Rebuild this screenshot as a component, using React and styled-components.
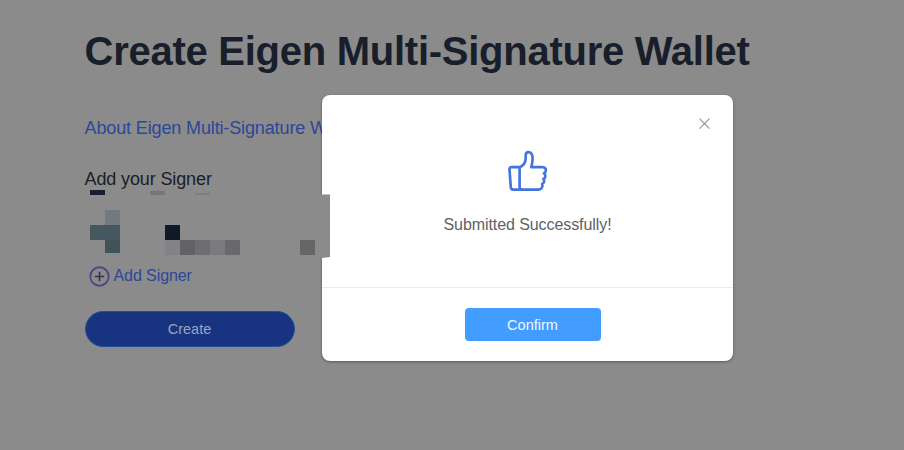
import React from "react";
import styled, { createGlobalStyle } from "styled-components";

const GlobalStyle = createGlobalStyle`
  * { box-sizing: border-box; }
  body {
    margin: 0;
    overflow: hidden;
    background: #8b8b8b;
    font-family: "Liberation Sans", Arial, sans-serif;
  }
  button { font-family: inherit; }
`;

const Page = styled.main`
  position: relative;
  height: 450px;
  padding: 28px 84.5px 0;
  display: flex;
  flex-direction: column;
  align-items: flex-start;
  background: #8b8b8b;
`;

const Title = styled.h1`
  margin: 0;
  font-size: 40px;
  line-height: 46px;
  font-weight: 700;
  letter-spacing: -0.26px;
  white-space: nowrap;
  color: #181e2a;
`;

const AboutLink = styled.a`
  margin-top: 44px;
  font-size: 18px;
  line-height: 21px;
  letter-spacing: -0.13px;
  white-space: nowrap;
  color: #2b4799;
`;

const Label = styled.h2`
  margin: 30px 0 0;
  font-size: 18px;
  line-height: 21px;
  font-weight: 400;
  letter-spacing: -0.12px;
  color: #1b1e25;
`;

const SignerRow = styled.div`
  position: relative;
  z-index: 2;
  height: 68px;
  width: 245px;
  margin-left: 0.5px;
  svg { display: block; }
`;

const AddSigner = styled.button`
  display: flex;
  align-items: center;
  gap: 4px;
  height: 22px;
  margin: 7px 0 0 4px;
  padding: 0;
  border: 0;
  background: none;
  font-size: 16px;
  line-height: 20px;
  letter-spacing: -0.08px;
  color: #2b4799;
`;

const CreateButton = styled.button`
  width: 210px;
  height: 36px;
  margin-top: 24px;
  padding: 0;
  border: 1px solid #23509a;
  border-radius: 18px;
  background: #183480;
  font-size: 14.5px;
  color: #9ba5bd;
`;

const Dialog = styled.section`
  position: absolute;
  z-index: 1;
  left: 322px;
  top: 95px;
  width: 411px;
  height: 266px;
  display: flex;
  flex-direction: column;
  border-radius: 8px;
  background: #fff;
  box-shadow: 0 1px 3px rgba(0, 0, 0, 0.35);
`;

const DialogHeader = styled.header`
  display: flex;
  justify-content: flex-end;
  padding: 22px 22px 0 0;
`;

const CloseButton = styled.button`
  width: 13px;
  height: 13px;
  padding: 0;
  border: 0;
  background: none;
  svg { display: block; }
`;

const DialogBody = styled.div`
  flex: 1;
  display: flex;
  flex-direction: column;
  align-items: center;
  padding-top: 20px;
`;

const Message = styled.p`
  margin: 23px 0 0;
  font-size: 16px;
  line-height: 20px;
  letter-spacing: -0.08px;
  color: #606164;
`;

const DialogFooter = styled.footer`
  height: 74px;
  display: flex;
  justify-content: center;
  align-items: flex-start;
  padding: 20px 0 0 10px;
  border-top: 1px solid #ebebeb;
`;

const ConfirmButton = styled.button`
  width: 136px;
  height: 33px;
  padding: 0;
  border: 0;
  border-radius: 4px;
  background: #439cff;
  font-size: 14.5px;
  color: #f1f8ff;
`;

const mosaic = [
  [5, 0, 15, 5, "#181f2e"],
  [65, 1, 15, 4, "#767679"],
  [110, 3, 15, 2, "#7e7e82"],
  [20, 20, 15, 15, "#717a7e"],
  [5, 35, 30, 15, "#46585f"],
  [20, 50, 15, 13, "#405359"],
  [80, 35, 15, 15, "#101a26"],
  [80, 50, 15, 15, "#828386"],
  [95, 50, 15, 15, "#626264"],
  [110, 50, 15, 15, "#6e6e71"],
  [125, 50, 15, 15, "#7b7b7d"],
  [140, 50, 15, 15, "#69696b"],
  [215, 50, 15, 15, "#666669"],
];

function SignerMosaic() {
  return (
    <svg width="245" height="68" aria-hidden="true">
      <path d="M5 4.5H245V67L237 68H5Z" fill="#8b8b8c" />
      {mosaic.map(([x, y, w, h, fill]) => (
        <rect key={`${x}-${y}`} x={x} y={y} width={w} height={h} fill={fill} />
      ))}
    </svg>
  );
}

function PlusIcon() {
  return (
    <svg width="21" height="21" viewBox="0 0 21 21" fill="none" aria-hidden="true">
      <circle cx="10.5" cy="10.5" r="9.2" stroke="#514585" strokeWidth="1.9" />
      <path d="M10.5 5.7V15.3M5.7 10.5H15.3" stroke="#30334f" strokeWidth="1.6" />
    </svg>
  );
}

function CloseIcon() {
  return (
    <svg width="13" height="13" viewBox="0 0 13 13" fill="none" aria-hidden="true">
      <path d="M1.5 1.7L11.5 11.7M11.5 1.7L1.5 11.7" stroke="#8f9194" strokeWidth="1.1" />
    </svg>
  );
}

function ThumbIcon() {
  return (
    <svg width="42" height="42" viewBox="0 0 42 42" fill="none" stroke="#4474df" strokeWidth="2.7" strokeLinejoin="round" strokeLinecap="round" aria-hidden="true">
      <path d="M12.6 17.2C16.5 15.7 18.5 12.8 18.7 8.5V5.5C18.7 2.8 20 2.2 21.6 2.2C24.8 2.2 25.8 5.5 25.6 9.2C25.5 12.2 24.8 14.5 24.3 17.2H35.6C38.9 17.2 39.6 20.2 38.4 22C37.8 22.9 37.1 23.2 36.9 23.5C39 24.7 39 27.8 36.3 28.9C38 30.7 37.2 33 35.2 34C36.1 36.8 34.7 39.6 31.4 39.6H15.2C13.3 39.6 12.6 38.8 12.6 37V17.2" />
      <path d="M12.6 17.2H4.7C3 17.2 2.3 18.1 2.5 19.7L3.8 37.1C3.9 38.8 4.7 39.6 6.3 39.6H15" />
    </svg>
  );
}

export default function App() {
  return (
    <>
      <GlobalStyle />
      <Page>
        <Title>Create Eigen Multi-Signature Wallet</Title>
        <AboutLink>About Eigen Multi-Signature Wallet</AboutLink>
        <Label>Add your Signer</Label>
        <SignerRow><SignerMosaic /></SignerRow>
        <AddSigner><PlusIcon />Add Signer</AddSigner>
        <CreateButton>Create</CreateButton>
        <Dialog role="dialog" aria-modal="true">
          <DialogHeader>
            <CloseButton aria-label="Close"><CloseIcon /></CloseButton>
          </DialogHeader>
          <DialogBody>
            <ThumbIcon />
            <Message>Submitted Successfully!</Message>
          </DialogBody>
          <DialogFooter><ConfirmButton>Confirm</ConfirmButton></DialogFooter>
        </Dialog>
      </Page>
    </>
  );
}
